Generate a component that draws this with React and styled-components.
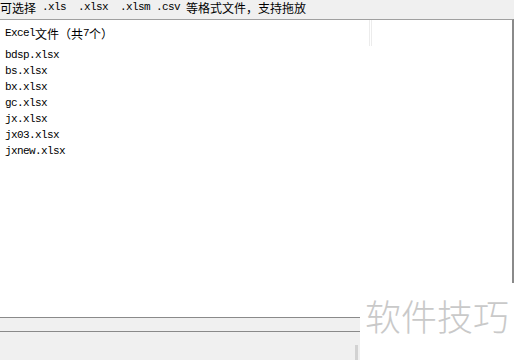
import React from 'react'
import styled, { createGlobalStyle } from 'styled-components'

const files = ['bdsp.xlsx', 'bs.xlsx', 'bx.xlsx', 'gc.xlsx', 'jx.xlsx', 'jx03.xlsx', 'jxnew.xlsx']

const Global = createGlobalStyle`
  html, body { margin: 0; padding: 0; background: #f0f0f0; }
`

const Window = styled.div`
  position: relative;
  width: 514px;
  height: 360px;
  overflow: hidden;
  display: flex;
  flex-direction: column;
  background: #f0f0f0;
  font-family: "Liberation Mono", "Noto Sans CJK SC", monospace;
  color: #000;
`

const HintBar = styled.div`
  height: 19px;
  flex-shrink: 0;
  display: flex;
  align-items: flex-start;
  font-size: 12px;
  line-height: 15px;
  white-space: pre;
  background: #f0f0f0;
`

const Han = styled.span`
  font-family: "Noto Sans CJK SC", sans-serif;
  font-size: 12px;
  letter-spacing: 0;
`

const Mono = styled.span`
  font-family: "Liberation Mono", monospace;
  font-size: 11px;
  letter-spacing: -0.6px;
`

const ListBox = styled.div`
  height: 297px;
  flex-shrink: 0;
  background: #fff;
  border-top: 1px solid #a0a0a0;
  border-right: 2px solid #8a8a8a;
  border-bottom: 1px solid #8a8a8a;
  display: flex;
  flex-direction: column;
`

const HeaderRow = styled.div`
  height: 26px;
  display: flex;
  align-items: center;
`

const HeaderCell = styled.div`
  width: ${p => p.w}px;
  height: 100%;
  display: flex;
  align-items: center;
  padding-left: 5px;
  box-sizing: border-box;
  border-right: ${p => (p.divider ? '3px double #ececec' : 'none')};
`

const Row = styled.div`
  height: 16px;
  line-height: 16px;
  padding-left: 5px;
  white-space: pre;
`

const Strip = styled.div`
  height: 13px;
  flex-shrink: 0;
  background: #f0f0f0;
  border-bottom: 1px solid #8a8a8a;
`

const BottomPanel = styled.div`
  flex: 1;
  display: flex;
  justify-content: flex-end;
  align-items: flex-end;
  padding-right: 156px;
  background: #f0f0f0;
`

const Grip = styled.div`
  width: 3px;
  height: 15px;
  background: #d2d2d2;
`

const Watermark = styled.div`
  position: absolute;
  left: 360px;
  top: 283px;
  width: 154px;
  height: 77px;
  background: #fff;
  display: flex;
  justify-content: center;
  padding-top: 10px;
  box-sizing: border-box;
  font-family: "Noto Sans CJK SC", sans-serif;
  font-weight: 300;
  font-size: 36px;
  line-height: 44px;
  color: #c9c9c9;
  letter-spacing: 0;
`

const App = () => {
  return (
    <>
      <Global />
      <Window>
        <HintBar>
          <Han>可选择</Han>
          <Mono> .xls  .xlsx  .xlsm .csv </Mono>
          <Han>等格式文件，支持拖放</Han>
        </HintBar>
        <ListBox>
          <HeaderRow>
            <HeaderCell w={372} divider>
              <Mono>Excel</Mono>
              <Han>文件（共</Han>
              <Mono>7</Mono>
              <Han>个）</Han>
            </HeaderCell>
          </HeaderRow>
          {files.map(f => (
            <Row key={f}>
              <Mono>{f}</Mono>
            </Row>
          ))}
        </ListBox>
        <Strip />
        <BottomPanel>
          <Grip />
        </BottomPanel>
        <Watermark>软件技巧</Watermark>
      </Window>
    </>
  )
}

export default App
